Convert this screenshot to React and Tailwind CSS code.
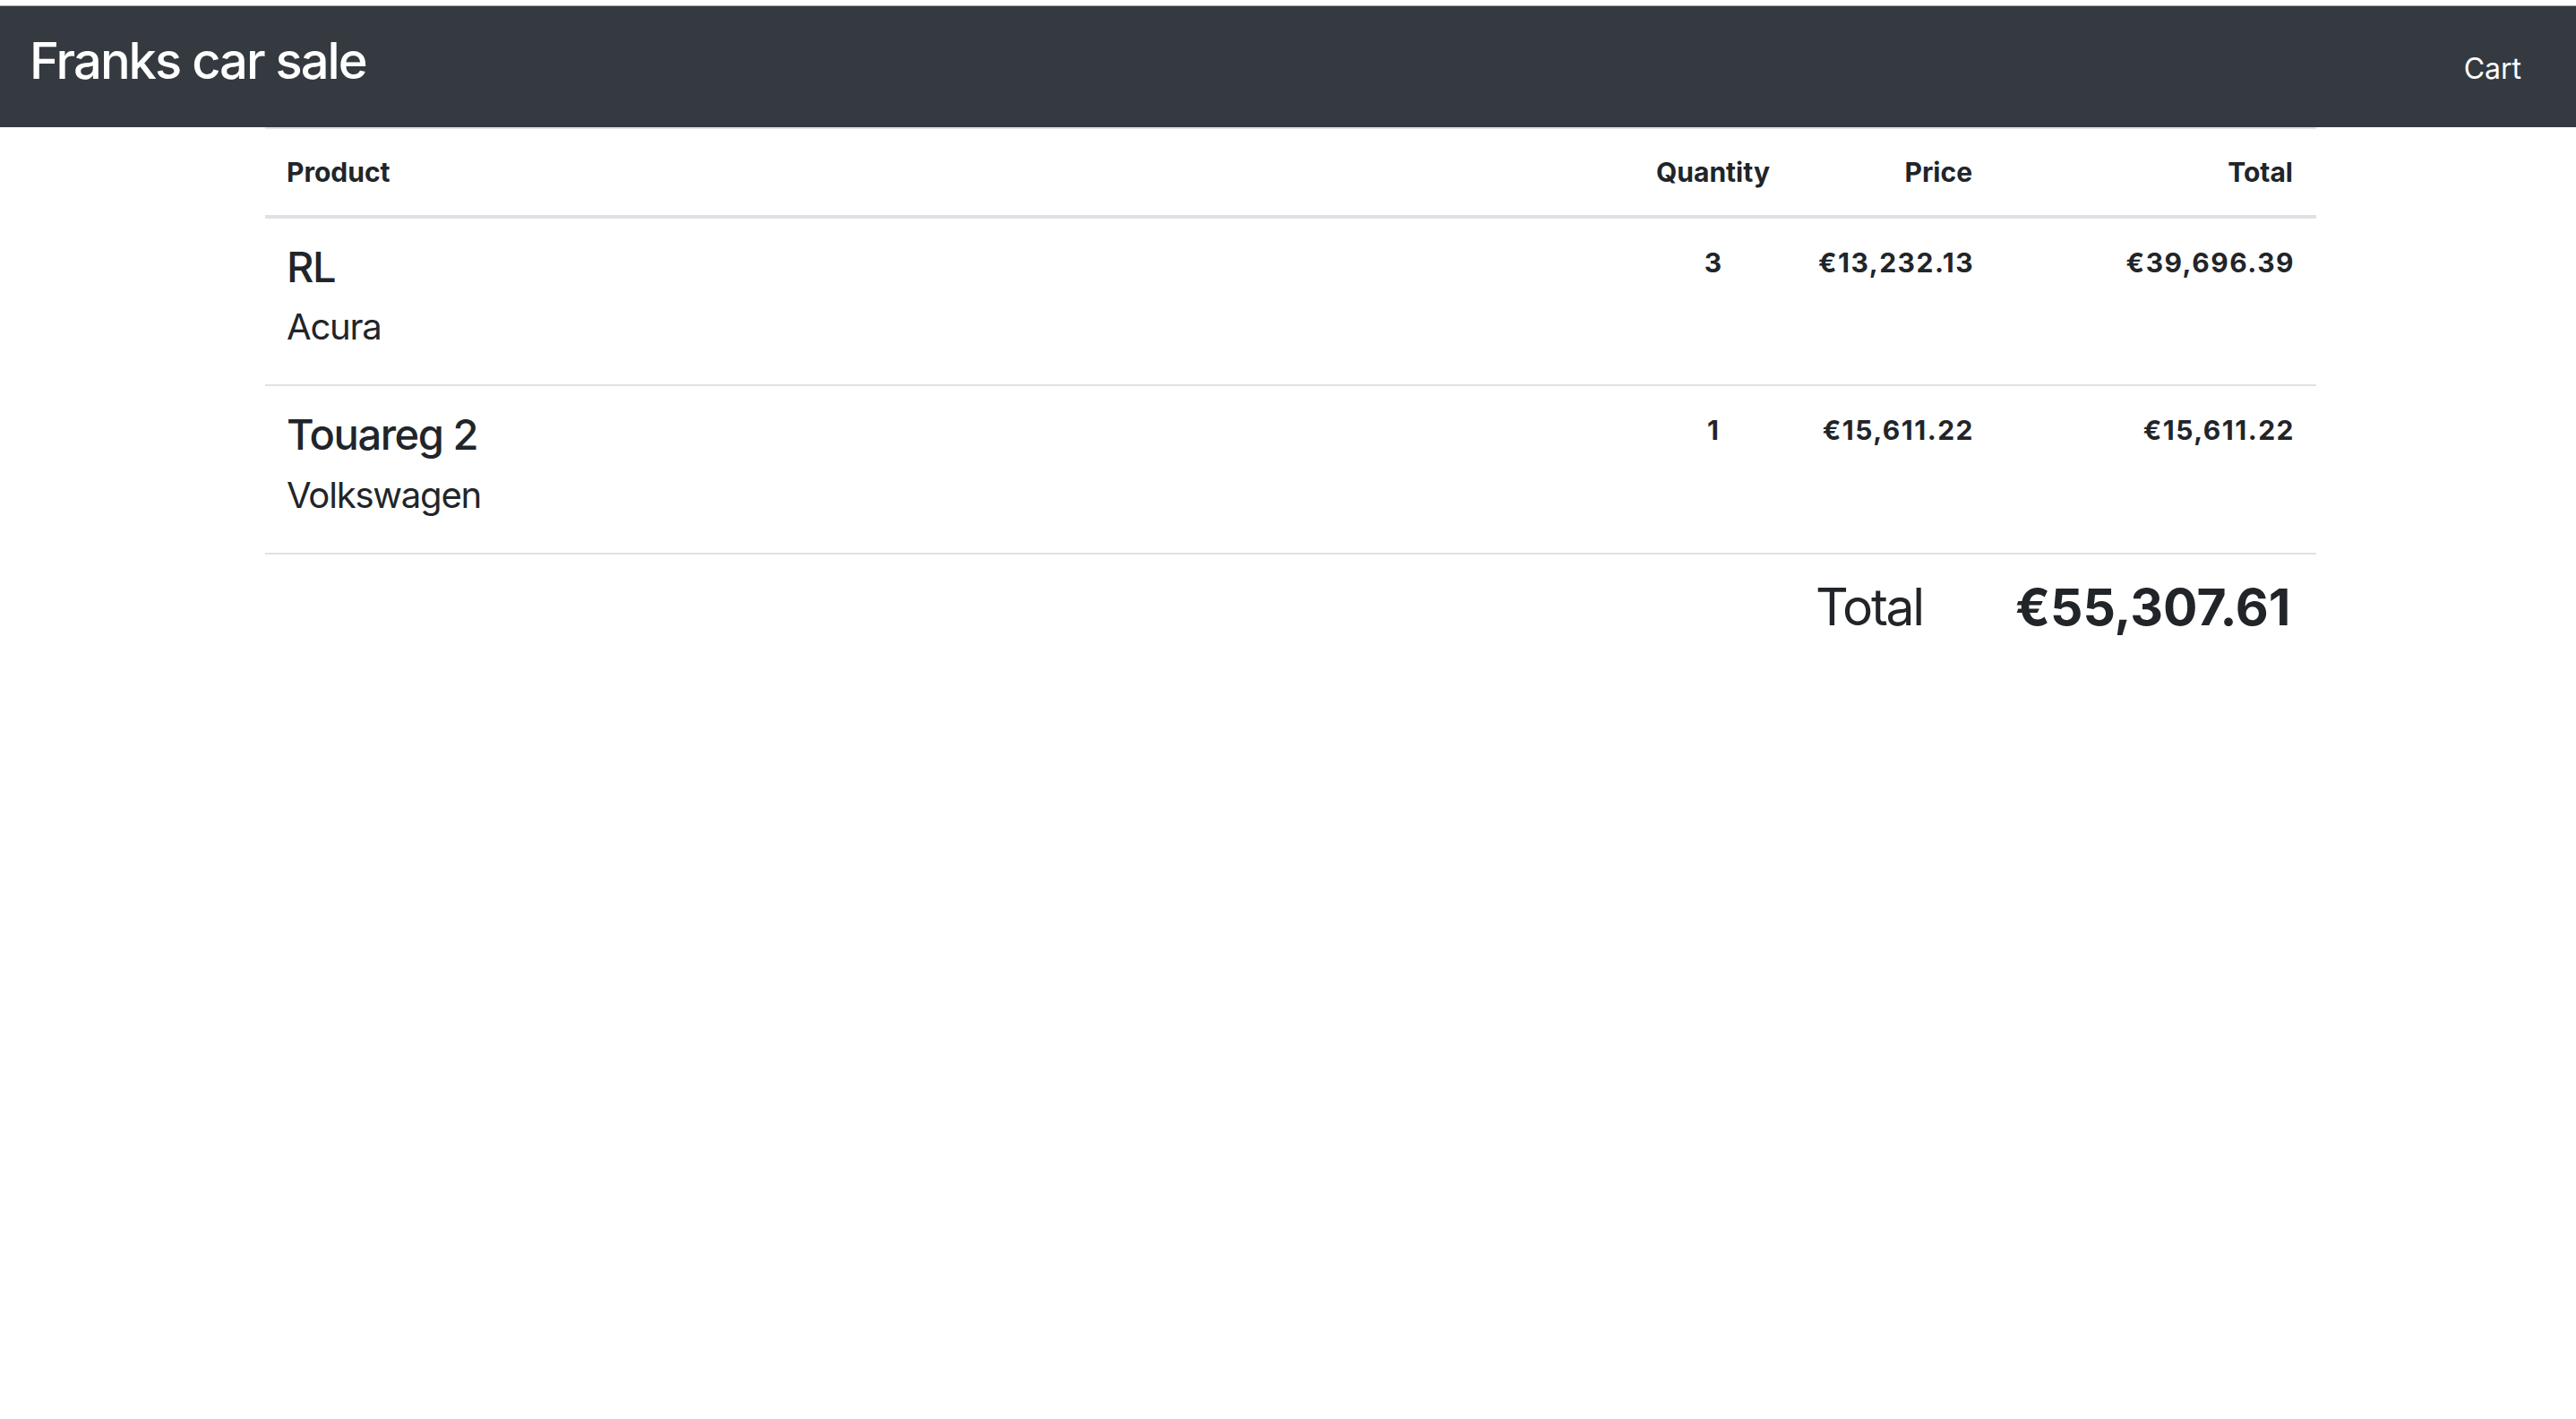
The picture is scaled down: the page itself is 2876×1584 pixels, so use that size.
import React from "react";

const items = [
  { model: "RL", make: "Acura", qty: 3, price: "€13,232.13", total: "€39,696.39" },
  { model: "Touareg 2", make: "Volkswagen", qty: 1, price: "€15,611.22", total: "€15,611.22" },
];

export default function App() {
  return (
    <div className="min-h-screen bg-white text-[#212529] font-['Inter','Roboto',sans-serif]">
      <div className="h-[6px] bg-white" />
      <div className="h-px bg-[#a0a0a0]" />
      <nav className="flex h-[135px] items-center justify-between bg-[#343a40] pl-[33px] pr-[61px]">
        <a className="mb-[13px] text-[56px] leading-none font-medium tracking-[-0.035em] text-white" href="#">
          Franks car sale
        </a>
        <a className="mt-[4px] text-[32px] leading-none text-white" href="#">
          Cart
        </a>
      </nav>

      <table className="ml-[296px] w-[2290px] table-fixed border-collapse">
        <colgroup>
          <col className="w-[1526px]" />
          <col className="w-[181px]" />
          <col className="w-[223px]" />
          <col className="w-[360px]" />
        </colgroup>
        <thead>
          <tr className="border-t-2 border-b-4 border-[#dee2e6]">
            <th className="px-6 pt-[26px] pb-[25px] text-left text-[30px] leading-[1.5] font-bold">Product</th>
            <th className="px-6 pt-[26px] pb-[25px] text-center text-[30px] leading-[1.5] font-bold">Quantity</th>
            <th className="px-6 pt-[26px] pb-[25px] text-right text-[30px] leading-[1.5] font-bold">Price</th>
            <th className="pl-6 pr-[26px] pt-[26px] pb-[25px] text-right text-[30px] leading-[1.5] font-bold">Total</th>
          </tr>
        </thead>
        <tbody>
          {items.map((it) => (
            <tr key={it.model} className="border-b-2 border-[#dee2e6] align-top">
              <td className="px-6 pt-[26px] pb-[24px]">
                <h5 className="mb-[9px] text-[47px] leading-[1.2] font-medium tracking-[-0.03em]">{it.model}</h5>
                <p className="mb-[10px] text-[40px] leading-[1.5] tracking-[-0.03em]">{it.make}</p>
              </td>
              <td className="px-6 pt-[27px] text-center text-[30px] leading-[1.5] font-bold">{it.qty}</td>
              <td className="pl-6 pr-[22px] pt-[27px] text-right text-[30px] leading-[1.5] font-bold tracking-[0.05em]">{it.price}</td>
              <td className="pl-6 pr-[24px] pt-[27px] text-right text-[30px] leading-[1.5] font-bold tracking-[0.05em]">{it.total}</td>
            </tr>
          ))}
          <tr className="align-top">
            <td colSpan={2} />
            <td className="px-6 pt-[25px] pb-6 text-left text-[57px] leading-[1.2] font-normal tracking-[-0.04em]">Total</td>
            <td className="pl-6 pr-[30px] pt-[25px] pb-6 text-right text-[57px] leading-[1.2] font-bold">€55,307.61</td>
          </tr>
        </tbody>
      </table>
    </div>
  );
}
